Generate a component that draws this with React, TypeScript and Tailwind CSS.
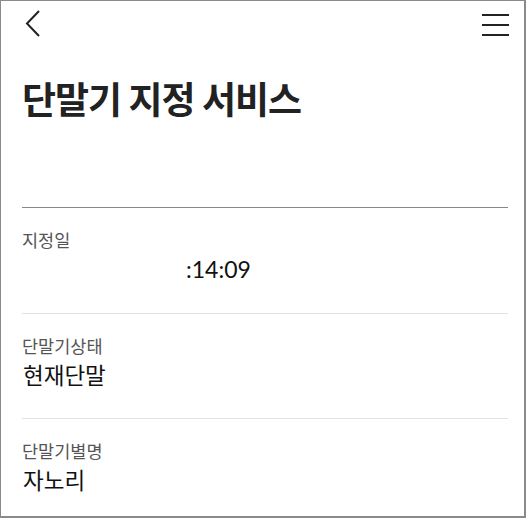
import React from "react";

const rows = [
  { label: "지정일", value: ":14:09", pad: true },
  { label: "단말기상태", value: "현재단말" },
  { label: "단말기별명", value: "자노리" },
];

export default function App() {
  return (
    <div
      className="h-[518px] w-[526px] bg-white border-t border-l border-r-2 border-b-2 border-[#8a8a8a] overflow-hidden"
      style={{ fontFamily: '"Noto Sans CJK KR", "Noto Sans", sans-serif' }}
    >
      {/* Header */}
      <div className="flex items-start justify-between h-[48px] pl-[24px] pr-[15px] pt-[9px]">
        <svg width="16" height="28" viewBox="0 0 16 28" fill="none">
          <polyline points="14,1 2,13.5 14,26" stroke="#222" strokeWidth="2" />
        </svg>
        <svg width="27" height="24" viewBox="0 0 27 24" className="mt-[3px]">
          <line x1="0" y1="2" x2="27" y2="2" stroke="#222" strokeWidth="2" />
          <line x1="0" y1="12" x2="27" y2="12" stroke="#222" strokeWidth="2" />
          <line x1="0" y1="22" x2="27" y2="22" stroke="#222" strokeWidth="2" />
        </svg>
      </div>

      {/* Title */}
      <h1 className="pl-[21px] pt-[25px] text-[37px] leading-[48px] font-bold text-[#222] tracking-[-1px]">
        단말기 지정 서비스
      </h1>

      <div className="mt-[85px] ml-[21px] mr-[16px] border-t border-[#888]">
        {rows.map((r, i) => (
          <div
            key={r.label}
            className={`h-[105px] pt-[20px] ${i > 0 ? "border-t border-[#e3e3e3]" : ""}`}
          >
            <div className="text-[17.5px] leading-[24px] text-[#555]">{r.label}</div>
            {r.pad ? (
              <div className="mt-[2px] pl-[164px] text-[23px] leading-[30px] text-[#111] font-['Lato',sans-serif]">
                {r.value}
              </div>
            ) : (
              <div className="mt-[1px] pl-[1px] text-[22.5px] leading-[30px] text-[#111]">
                {r.value}
              </div>
            )}
          </div>
        ))}
      </div>
    </div>
  );
}
